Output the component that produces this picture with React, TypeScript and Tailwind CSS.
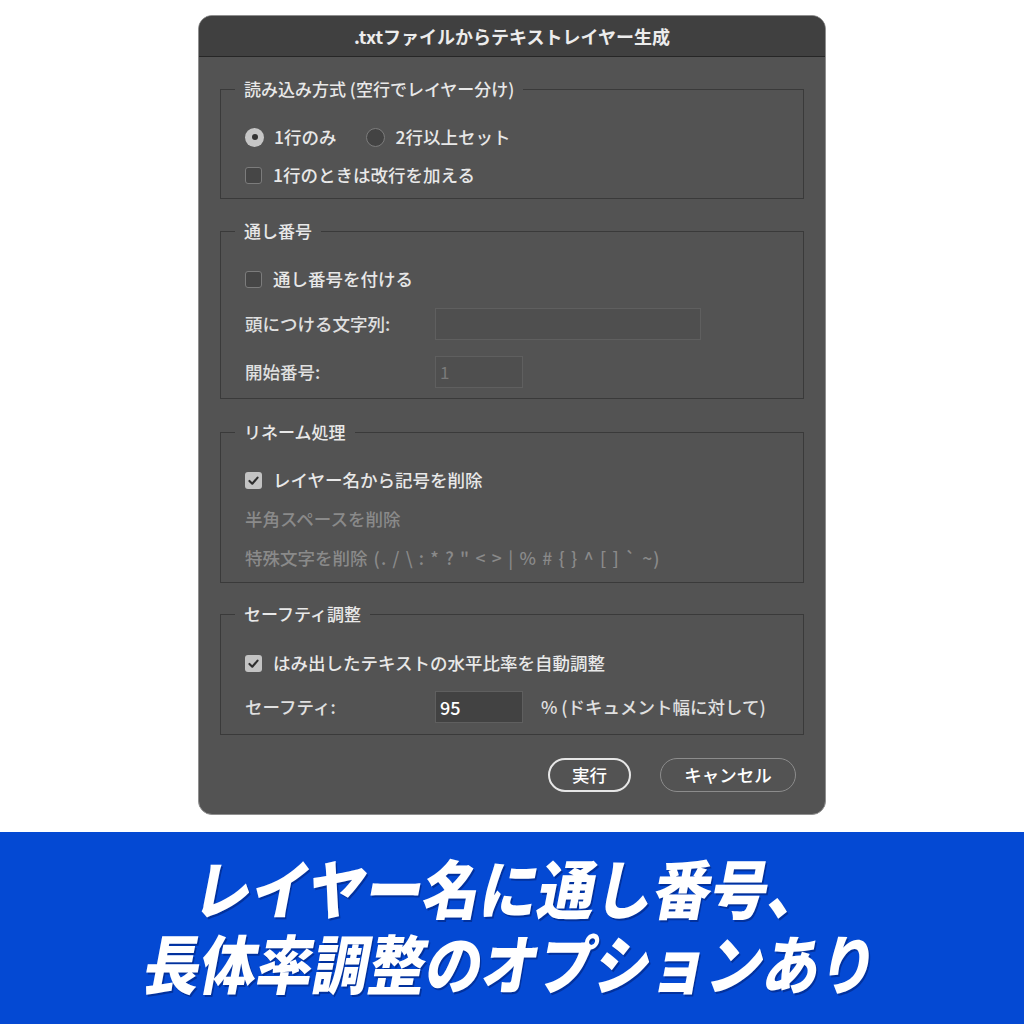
import type { ReactNode } from "react";

const font = { fontFamily: '"Noto Sans CJK JP", "Noto Sans", sans-serif' };

function Group({ title, children, className }: { title: string; children: ReactNode; className?: string }) {
  return (
    <fieldset className={`border border-[#3a3a3a] px-[24px] ${className ?? ""}`}>
      <legend className="ml-[-10px] px-[9px] text-[17px] leading-[22px] font-medium text-[#e8e8e8]">{title}</legend>
      {children}
    </fieldset>
  );
}

function Check({ checked, label }: { checked?: boolean; label: string }) {
  return (
    <div className="flex items-center gap-[11px]">
      {checked ? (
        <span className="flex h-[17px] w-[17px] items-center justify-center rounded-[3px] bg-[#c3c3c3]">
          <svg viewBox="0 0 16 16" className="h-[13px] w-[13px]">
            <polyline points="3,8.5 6.5,12 13,4.5" fill="none" stroke="#2e2e2e" strokeWidth="2.6" strokeLinecap="round" strokeLinejoin="round" />
          </svg>
        </span>
      ) : (
        <span className="h-[17px] w-[17px] rounded-[3px] border border-[#7c7c7c] bg-[#464646]" />
      )}
      <span className="text-[17.5px] font-medium text-[#e8e8e8]">{label}</span>
    </div>
  );
}

function Radio({ checked, label }: { checked?: boolean; label: string }) {
  return (
    <div className="flex items-center gap-[10px]">
      {checked ? (
        <span className="flex h-[19px] w-[19px] items-center justify-center rounded-full bg-[#c6c6c6]">
          <span className="h-[6px] w-[6px] rounded-full bg-[#333]" />
        </span>
      ) : (
        <span className="h-[19px] w-[19px] rounded-full border border-[#7c7c7c] bg-[#434343]" />
      )}
      <span className="text-[17.5px] font-medium text-[#e8e8e8]">{label}</span>
    </div>
  );
}

export default function App() {
  return (
    <div className="flex h-[1024px] w-[1024px] flex-col items-center bg-white pt-[15px]" style={font}>
      <div className="flex h-[800px] w-[628px] flex-col overflow-hidden rounded-[14px] border border-[#8f8f8f] bg-[#535353]">
        <div className="flex h-[41px] shrink-0 items-center justify-center border-b border-[#262626] bg-[#404040] text-[18px] font-bold text-[#ececec]">
          .txtファイルからテキストレイヤー生成
        </div>

        <div className="flex flex-col px-[21px] pt-[21px]">
          <Group title="読み込み方式 (空行でレイヤー分け)" className="pt-[18px] pb-[4px]">
            <div className="flex h-[38px] items-center gap-[30px]">
              <Radio checked label="1行のみ" />
              <Radio label="2行以上セット" />
            </div>
            <div className="flex h-[38px] items-center">
              <Check label="1行のときは改行を加える" />
            </div>
          </Group>

          <Group title="通し番号" className="mt-[21px] pt-[18px] pb-[10px]">
            <div className="flex h-[38px] items-center">
              <Check label="通し番号を付ける" />
            </div>
            <div className="mt-[10px] flex h-[32px] items-center">
              <span className="w-[190px] text-[17.5px] font-medium text-[#e0e0e0]">頭につける文字列:</span>
              <div className="h-[32px] w-[266px] border border-[#5f5f5f] bg-[#4f4f4f]" />
            </div>
            <div className="mt-[16px] flex h-[32px] items-center">
              <span className="w-[190px] text-[17.5px] font-medium text-[#e0e0e0]">開始番号:</span>
              <div className="flex h-[32px] w-[88px] items-center border border-[#5f5f5f] bg-[#4f4f4f] px-[4px] text-[17px] text-[#7a7a7a]">
                1
              </div>
            </div>
          </Group>

          <Group title="リネーム処理" className="mt-[22px] pt-[18px] pb-[4px]">
            <div className="flex h-[39px] items-center">
              <Check checked label="レイヤー名から記号を削除" />
            </div>
            <div className="flex h-[39px] items-center text-[17.5px] font-medium text-[#8a8a8a]">半角スペースを削除</div>
            <div className="flex h-[39px] items-center text-[17.5px] font-medium text-[#8a8a8a]">
              特殊文字を削除
              <span className="ml-[6px] tracking-[1.2px]">(. / \ : * ? " &lt; &gt; | % # {"{"} {"}"} ^ [ ] ` ~)</span>
            </div>
          </Group>

          <Group title="セーフティ調整" className="mt-[20px] pt-[19px] pb-[11px]">
            <div className="flex h-[38px] items-center">
              <Check checked label="はみ出したテキストの水平比率を自動調整" />
            </div>
            <div className="mt-[9px] flex h-[32px] items-center">
              <span className="w-[190px] text-[17.5px] font-medium text-[#e0e0e0]">セーフティ:</span>
              <div className="flex h-[32px] w-[88px] items-center border border-[#5f5f5f] bg-[#424242] px-[4px] text-[18px] font-medium text-white">
                95
              </div>
              <span className="ml-[18px] text-[17.5px] font-medium text-[#e0e0e0]">% (ドキュメント幅に対して)</span>
            </div>
          </Group>

          <div className="mt-[23px] flex justify-end gap-[29px] pr-[8px]">
            <button className="h-[34px] w-[83px] rounded-full border-2 border-[#e6e6e6] text-[17.5px] font-medium text-white">
              実行
            </button>
            <button className="h-[34px] w-[136px] rounded-full border-[1.5px] border-[#8c8c8c] text-[17.5px] font-medium text-white">
              キャンセル
            </button>
          </div>
        </div>
      </div>

      <div className="mt-[17px] flex h-[192px] w-full flex-col items-center justify-center bg-[#0449d3] pb-[8px]">
        <div className="-skew-x-12 scale-x-[0.9] text-[64px] leading-[75px] font-black text-white [text-shadow:2px_2px_0_rgba(0,20,90,0.45)]">
          レイヤー名に通し番号、
        </div>
        <div className="-skew-x-12 scale-x-[0.88] text-[64px] leading-[75px] font-black text-white [text-shadow:2px_2px_0_rgba(0,20,90,0.45)]">
          長体率調整のオプションあり
        </div>
      </div>
    </div>
  );
}
